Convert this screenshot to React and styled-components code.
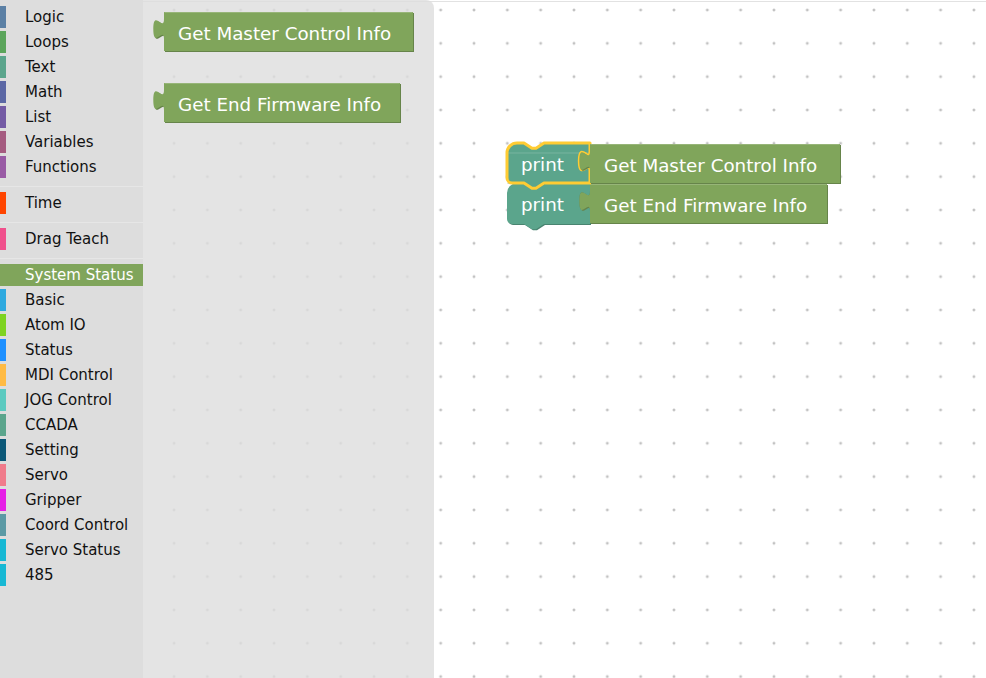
import React from 'react'
import styled, { createGlobalStyle } from 'styled-components'

const GlobalStyle = createGlobalStyle`
  html, body {
    margin: 0;
    padding: 0;
    background: #fff;
  }
  body {
    font-family: "DejaVu Sans", "Liberation Sans", sans-serif;
  }
`

const FONT = '"DejaVu Sans", "Liberation Sans", sans-serif'

const GREEN = { main: '#80a55b', dark: '#66844a', light: '#a6c08c' }
const TEAL = { main: '#5ba58c', dark: '#498470', light: '#8cc0af' }

const categories = [
  { name: 'Logic', color: '#5b80a5' },
  { name: 'Loops', color: '#5ba55b' },
  { name: 'Text', color: '#5ba58c' },
  { name: 'Math', color: '#5b67a5' },
  { name: 'List', color: '#745ba5' },
  { name: 'Variables', color: '#a55b80' },
  { name: 'Functions', color: '#995ba5' },
  { sep: true },
  { name: 'Time', color: '#ff4500' },
  { sep: true },
  { name: 'Drag Teach', color: '#f0508c' },
  { sep: true },
  { name: 'System Status', color: '#80a55b', selected: true },
  { name: 'Basic', color: '#2ea9df' },
  { name: 'Atom IO', color: '#7ed321' },
  { name: 'Status', color: '#1e90ff' },
  { name: 'MDI Control', color: '#ffbb44' },
  { name: 'JOG Control', color: '#5ccac0' },
  { name: 'CCADA', color: '#5ba58c' },
  { name: 'Setting', color: '#0b5878' },
  { name: 'Servo', color: '#f07b8b' },
  { name: 'Gripper', color: '#e61ee6' },
  { name: 'Coord Control', color: '#5b9aa5' },
  { name: 'Servo Status', color: '#17b8d4' },
  { name: '485', color: '#17b8d4' },
]

// puzzle tab, 20px tall, 10.7px deep (blockly tab scaled 1.33)
const TAB_UP = 'c 0,-13.3 -10.7,10.7 -10.7,-10 s 10.7,3.3 10.7,-10'
const TAB_DOWN = 'c 0,13.3 -10.7,-10.7 -10.7,10 s 10.7,-3.3 10.7,10'

const valuePath = (w, h, tabTop = 7) =>
  `M 0,0 H ${w} V ${h} H 0 V ${tabTop + 20} ${TAB_UP} Z`

const statementPath = (w, h, notchTop = 8) => {
  const r = 10
  const n = 17
  return `M 0,${r} a ${r},${r} 0 0,1 ${r},-${r} H ${n} l 8,5.3 l 4,0 l 8,-5.3 H ${w} V ${notchTop} ${TAB_DOWN} V ${h} H ${n + 20} l -8,5.3 l -4,0 l -8,-5.3 H 5 a 5,5 0 0,1 -5,-5 Z`
}

function BlockShape({ d, colors, x = 0, y = 0, w, text, outline }) {
  return (
    <g transform={`translate(${x},${y})`}>
      <path d={d} fill={colors.dark} transform="translate(1,1)" />
      <path d={d} fill={colors.main} />
      <path d={`M 0.5,${y === 0 && outline ? 10 : 0.5} H ${w - 0.5}`} stroke={colors.light} strokeWidth="1" fill="none" opacity="0.6" />
      {outline && <path d={d} fill="none" stroke="#fc3" strokeWidth="3" strokeLinejoin="round" />}
      <text x="14" y="28" fill="#fff" fontSize="18.3" fontFamily={FONT}>
        {text}
      </text>
    </g>
  )
}

function FlyoutBlock({ width, text }) {
  return (
    <BlockSvg width={width + 14} height={42}>
      <g transform="translate(11,0)">
        <BlockShape d={valuePath(width, 39)} colors={GREEN} w={width} text={text} />
      </g>
    </BlockSvg>
  )
}

export default function App() {
  return (
    <>
      <GlobalStyle />
      <Page>
        <Toolbox>
          {categories.map((c, i) =>
            c.sep ? (
              <Separator key={i} />
            ) : (
              <Row key={c.name} selected={c.selected} color={c.color}>
                <ColorBar color={c.color} />
                <Label selected={c.selected}>{c.name}</Label>
              </Row>
            )
          )}
        </Toolbox>
        <Workspace>
          <Flyout>
            <FlyoutBlock width={249} text="Get Master Control Info" />
            <FlyoutBlock width={236} text="Get End Firmware Info" />
          </Flyout>
          <Stack width={345} height={95}>
            <g transform="translate(4,3)">
              <BlockShape d={statementPath(83, 41)} colors={TEAL} y={40} w={83} text="print" />
              <BlockShape d={valuePath(237, 39)} colors={GREEN} x={83} y={41} w={237} text="Get End Firmware Info" />
              <BlockShape d={statementPath(83, 40)} colors={TEAL} w={83} text="print" outline />
              <BlockShape d={valuePath(250, 39)} colors={GREEN} x={83} y={1} w={250} text="Get Master Control Info" />
            </g>
          </Stack>
        </Workspace>
      </Page>
    </>
  )
}

const Page = styled.div`
  display: flex;
  width: 986px;
  height: 678px;
  overflow: hidden;
`

const Toolbox = styled.div`
  width: 143px;
  flex-shrink: 0;
  background: #ddd;
  display: flex;
  flex-direction: column;
  padding-top: 6px;
  box-sizing: border-box;
`

const Row = styled.div`
  display: flex;
  align-items: stretch;
  height: 22px;
  margin-bottom: 3px;
  background: ${p => (p.selected ? p.color : 'transparent')};
`

const ColorBar = styled.div`
  width: 6px;
  background: ${p => p.color};
`

const Label = styled.span`
  margin-left: 19px;
  font-size: 15px;
  line-height: 22px;
  color: ${p => (p.selected ? '#fff' : '#111')};
  white-space: nowrap;
`

const Separator = styled.div`
  height: 0;
  border-bottom: 1px solid #e6e6e6;
  margin: 5px 0;
`

const Workspace = styled.div`
  position: relative;
  flex: 1;
  height: 678px;
  background-color: #fff;
  background-image: radial-gradient(circle, #c2c2c2 0, #c2c2c2 1px, rgba(255, 255, 255, 0) 1.8px);
  background-size: 33.333px 33.333px;
  background-position: 14.4px -6.67px;
  box-shadow: inset 0 1px 0 #fff, inset 0 2px 0 #e2e2e2;
`

const Flyout = styled.div`
  position: absolute;
  left: 0;
  top: 0;
  bottom: 0;
  width: 291px;
  background: rgba(221, 221, 221, 0.8);
  border-top-right-radius: 8px;
  display: flex;
  flex-direction: column;
  gap: 29px;
  padding: 12px 0 0 10px;
  box-sizing: border-box;
`

const BlockSvg = styled.svg`
  display: block;
  overflow: visible;
`

const Stack = styled.svg`
  position: absolute;
  left: 360px;
  top: 140px;
  overflow: visible;
`
